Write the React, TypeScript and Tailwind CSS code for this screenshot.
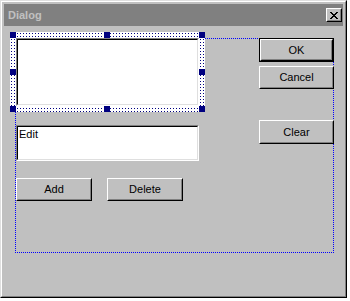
import React from "react";

function Btn({ label, def, className }: { label: string; def?: boolean; className: string }) {
  return (
    <div className={className}>
      <div className={def ? "h-full w-full border border-black" : "h-full w-full"}>
        <div className="h-full w-full border border-t-white border-l-white border-r-black border-b-black">
          <div className="flex h-full w-full items-center justify-center border border-t-[#c0c0c0] border-l-[#c0c0c0] border-r-[#808080] border-b-[#808080] bg-[#c0c0c0] text-black">
            {label}
          </div>
        </div>
      </div>
    </div>
  );
}

function Handle({ className }: { className: string }) {
  return <div className={`absolute h-[6px] w-[6px] bg-[#000080] ${className}`} />;
}

export default function App() {
  return (
    <div className="h-[301px] w-[350px] bg-white font-['Liberation_Sans',Arial,sans-serif] text-[11px] leading-[13px] text-black">
      <div className="h-[298px] w-[347px] border border-t-[#dfdfdf] border-l-[#dfdfdf] border-r-black border-b-black">
        <div className="flex h-full w-full flex-col border border-t-white border-l-white border-r-[#808080] border-b-[#808080] bg-[#c0c0c0] p-[2px]">
          {/* caption */}
          <div className="flex h-[22px] shrink-0 items-center justify-between bg-[#808080] pl-[4px] pr-[1px]">
            <span className="font-bold text-[#c0c0c0]">Dialog</span>
            <div className="h-[14px] w-[16px] border border-t-white border-l-white border-r-black border-b-black">
              <div className="flex h-full w-full items-center justify-center border border-t-[#c0c0c0] border-l-[#c0c0c0] border-r-[#808080] border-b-[#808080] bg-[#c0c0c0]">
                <svg width="8" height="7" viewBox="0 0 8 7" shapeRendering="crispEdges">
                  <path
                    d="M0 0h2v1H0zM6 0h2v1H6zM1 1h2v1H1zM5 1h2v1H5zM2 2h4v1H2zM3 3h2v1H3zM2 4h4v1H2zM1 5h2v1H1zM5 5h2v1H5zM0 6h2v1H0zM6 6h2v1H6z"
                    fill="#000"
                  />
                </svg>
              </div>
            </div>
          </div>

          {/* client / design canvas */}
          <div className="relative flex flex-1 items-start pl-[6px] pt-[6px]">
            {/* dialog boundary drawn by the editor, behind the controls */}
            <div className="absolute left-[11px] top-[12px] h-[215px] w-[319px] border border-dotted border-[#0000ff]" />

            {/* left column */}
            <div className="relative flex w-[195px] flex-col">
              {/* selected list box with tracker */}
              <div className="relative h-[80px] w-[195px] p-[6px]">
                <svg className="absolute inset-0" width="195" height="80" shapeRendering="crispEdges">
                  <defs>
                    <pattern id="hatch" width="3" height="3" patternUnits="userSpaceOnUse">
                      <rect width="3" height="3" fill="#fff" />
                      <rect x="1" y="1" width="1" height="1" fill="#000080" />
                    </pattern>
                  </defs>
                  <rect width="195" height="80" fill="url(#hatch)" />
                </svg>
                <div className="relative h-full w-full border border-t-[#808080] border-l-[#808080] border-r-white border-b-white">
                  <div className="h-full w-full border border-t-black border-l-black border-r-[#dfdfdf] border-b-[#dfdfdf] bg-white" />
                </div>
                <Handle className="left-0 top-0" />
                <Handle className="left-[94px] top-0" />
                <Handle className="right-0 top-0" />
                <Handle className="left-0 top-[37px]" />
                <Handle className="right-0 top-[37px]" />
                <Handle className="bottom-0 left-0" />
                <Handle className="bottom-0 left-[94px]" />
                <Handle className="bottom-0 right-0" />
              </div>

              {/* edit */}
              <div className="ml-[6px] mt-[13px] h-[36px] w-[183px] border border-t-[#808080] border-l-[#808080] border-r-white border-b-white">
                <div className="h-full w-full border border-t-black border-l-black border-r-[#dfdfdf] border-b-[#dfdfdf] bg-white pl-[1px] pt-[1px]">
                  Edit
                </div>
              </div>

              {/* add / delete */}
              <div className="ml-[6px] mt-[17px] flex gap-[15px]">
                <Btn label="Add" className="h-[23px] w-[76px]" />
                <Btn label="Delete" className="h-[23px] w-[76px]" />
              </div>
            </div>

            {/* right column */}
            <div className="relative ml-[54px] mt-[6px] flex w-[75px] flex-col">
              <Btn label="OK" def className="h-[24px] w-[75px]" />
              <Btn label="Cancel" className="mt-[4px] h-[23px] w-[75px]" />
              <Btn label="Clear" className="mt-[31px] h-[24px] w-[75px]" />
            </div>
          </div>
        </div>
      </div>
    </div>
  );
}
